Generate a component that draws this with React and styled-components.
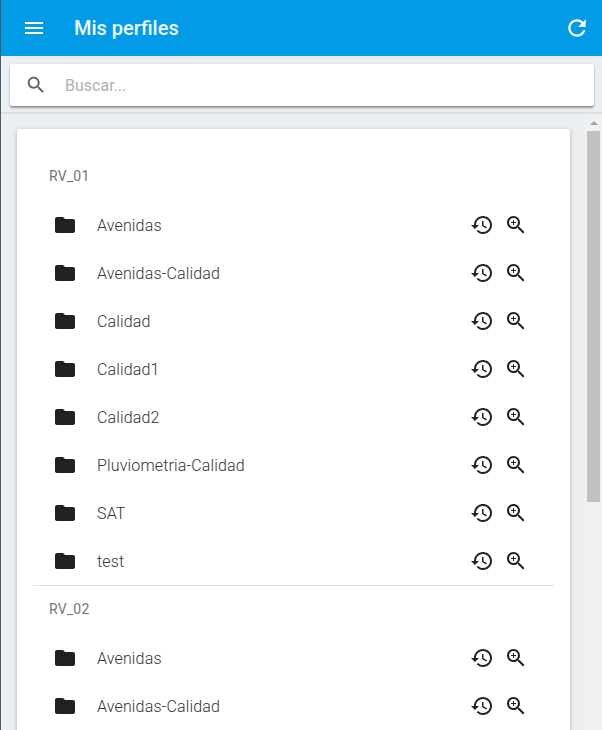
import React from "react";
import styled, { createGlobalStyle } from "styled-components";

const Global = createGlobalStyle`
  html, body { margin: 0; padding: 0; height: 100%; overflow: hidden; background: #eceff1; }
  #root { height: 100%; }
  * { box-sizing: border-box; }
`;

const Page = styled.div`
  height: 730px;
  width: 602px;
  display: flex;
  flex-direction: column;
  background: #eceff1;
  font-family: Roboto, "Liberation Sans", sans-serif;
  border-left: 1px solid #4a5a66;
  overflow: hidden;
`;

const AppBar = styled.header`
  height: 56px;
  flex: none;
  display: flex;
  align-items: center;
  background: #039be5;
  color: #fff;
  padding: 0 12px 0 21px;
`;

const Title = styled.h1`
  margin: 0 0 0 28px;
  font-size: 20px;
  font-weight: 500;
  flex: 1;
  opacity: 0.93;
`;

const SearchWrap = styled.div`
  flex: none;
  height: 58px;
  padding: 8px 8px 8px 9px;
  border-bottom: 2px solid #dde0e2;
`;

const SearchBar = styled.div`
  height: 42px;
  background: #fff;
  border-radius: 2px;
  display: flex;
  align-items: center;
  padding-left: 15px;
  box-shadow: 0 2px 2px rgba(0, 0, 0, 0.35), 0 0 2px rgba(0, 0, 0, 0.12);
  color: #616161;
`;

const SearchText = styled.span`
  margin-left: 18px;
  font-size: 16px;
  color: #b0b0b0;
`;

const Body = styled.div`
  flex: 1;
  min-height: 0;
  display: flex;
`;

const Scroller = styled.main`
  flex: 1;
  min-width: 0;
  overflow: hidden;
`;

const Rail = styled.div`
  width: 17px;
  flex: none;
  background: #f1f1f1;
  display: flex;
  flex-direction: column;
  align-items: center;
`;

const RailButton = styled.div`
  height: 17px;
  flex: none;
  display: flex;
  align-items: center;
  justify-content: center;
  &::before {
    content: "";
    border-left: 4px solid transparent;
    border-right: 4px solid transparent;
    border-bottom: 4px solid #a3a3a3;
  }
`;

const RailThumb = styled.div`
  width: 13px;
  height: 371px;
  flex: none;
  background: #c1c1c1;
`;

const Card = styled.section`
  margin: 15px 15px 15px 16px;
  width: 553px;
  background: #fff;
  border-radius: 2px;
  padding: 24px 16px 8px;
  box-shadow: 0 1px 4px rgba(0, 0, 0, 0.25);
`;

const Group = styled.div`
  & + & { border-top: 1px solid #e0e0e0; }
`;

const GroupLabel = styled.div`
  height: 48px;
  display: flex;
  align-items: center;
  padding: 0 0 2px 16px;
  font-size: 14px;
  letter-spacing: 0.2px;
  color: #757575;
`;

const Row = styled.div`
  height: 48px;
  display: flex;
  align-items: center;
  padding: 0 26px 0 20px;
  color: #212121;
`;

const RowName = styled.span`
  flex: 1;
  margin-left: 20px;
  font-size: 16px;
  font-weight: 300;
  color: #333;
  letter-spacing: 0.15px;
`;

const Actions = styled.div`
  display: flex;
  align-items: center;
  gap: 10px;
`;

const Icon = ({ d, size = 24, fill = "currentColor" }) => (
  <svg width={size} height={size} viewBox="0 0 24 24" fill={fill} style={{ display: "block", flex: "none" }}>
    <path d={d} />
  </svg>
);

const paths = {
  menu: "M3 18h18v-2H3v2zm0-5h18v-2H3v2zm0-7v2h18V6H3z",
  refresh: "M17.65 6.35C16.2 4.9 14.21 4 12 4c-4.42 0-7.99 3.58-7.99 8s3.57 8 7.99 8c3.73 0 6.84-2.55 7.73-6h-2.08c-.82 2.33-3.04 4-5.65 4-3.31 0-6-2.69-6-6s2.69-6 6-6c1.66 0 3.14.69 4.22 1.78L13 11h7V4l-2.35 2.35z",
  search: "M15.5 14h-.79l-.28-.27C15.41 12.59 16 11.11 16 9.5 16 5.91 13.09 3 9.5 3S3 5.91 3 9.5 5.91 16 9.5 16c1.61 0 3.09-.59 4.23-1.57l.27.28v.79l5 4.99L20.49 19l-4.99-5zm-6 0C7.01 14 5 11.99 5 9.5S7.01 5 9.5 5 14 7.01 14 9.5 11.99 14 9.5 14z",
  folder: "M10 4H4c-1.1 0-1.99.9-1.99 2L2 18c0 1.1.9 2 2 2h16c1.1 0 2-.9 2-2V8c0-1.1-.9-2-2-2h-8l-2-2z",
  history: "M13 3c-4.97 0-9 4.03-9 9H1l3.89 3.89.07.14L9 12H6c0-3.87 3.13-7 7-7s7 3.13 7 7-3.13 7-7 7c-1.93 0-3.68-.79-4.94-2.06l-1.42 1.42C8.27 19.99 10.51 21 13 21c4.97 0 9-4.03 9-9s-4.03-9-9-9zm-1 5v5l4.28 2.54.72-1.21-3.5-2.08V8H12z",
  zoom: "M15.5 14h-.79l-.28-.27C15.41 12.59 16 11.11 16 9.5 16 5.91 13.09 3 9.5 3S3 5.91 3 9.5 5.91 16 9.5 16c1.61 0 3.09-.59 4.23-1.57l.27.28v.79l5 4.99L20.49 19l-4.99-5zm-6 0C7.01 14 5 11.99 5 9.5S7.01 5 9.5 5 14 7.01 14 9.5 11.99 14 9.5 14zm2.5-4h-2v2H9v-2H7V9h2V7h1v2h2v1z",
};

const names = ["Avenidas", "Avenidas-Calidad", "Calidad", "Calidad1", "Calidad2", "Pluviometria-Calidad", "SAT", "test"];

const groups = [
  { label: "RV_01", rows: names },
  { label: "RV_02", rows: names.slice(0, 2) },
];

export default function App() {
  return (
    <Page>
      <Global />
      <AppBar>
        <Icon d={paths.menu} />
        <Title>Mis perfiles</Title>
        <Icon d={paths.refresh} size={26} />
      </AppBar>
      <SearchWrap>
        <SearchBar>
          <Icon d={paths.search} size={22} />
          <SearchText>Buscar...</SearchText>
        </SearchBar>
      </SearchWrap>
      <Body>
        <Scroller>
          <Card>
            {groups.map((g) => (
              <Group key={g.label}>
                <GroupLabel>{g.label}</GroupLabel>
                {g.rows.map((name) => (
                  <Row key={name}>
                    <Icon d={paths.folder} />
                    <RowName>{name}</RowName>
                    <Actions>
                      <Icon d={paths.history} />
                      <Icon d={paths.zoom} />
                    </Actions>
                  </Row>
                ))}
              </Group>
            ))}
          </Card>
        </Scroller>
        <Rail>
          <RailButton />
          <RailThumb />
        </Rail>
      </Body>
    </Page>
  );
}
